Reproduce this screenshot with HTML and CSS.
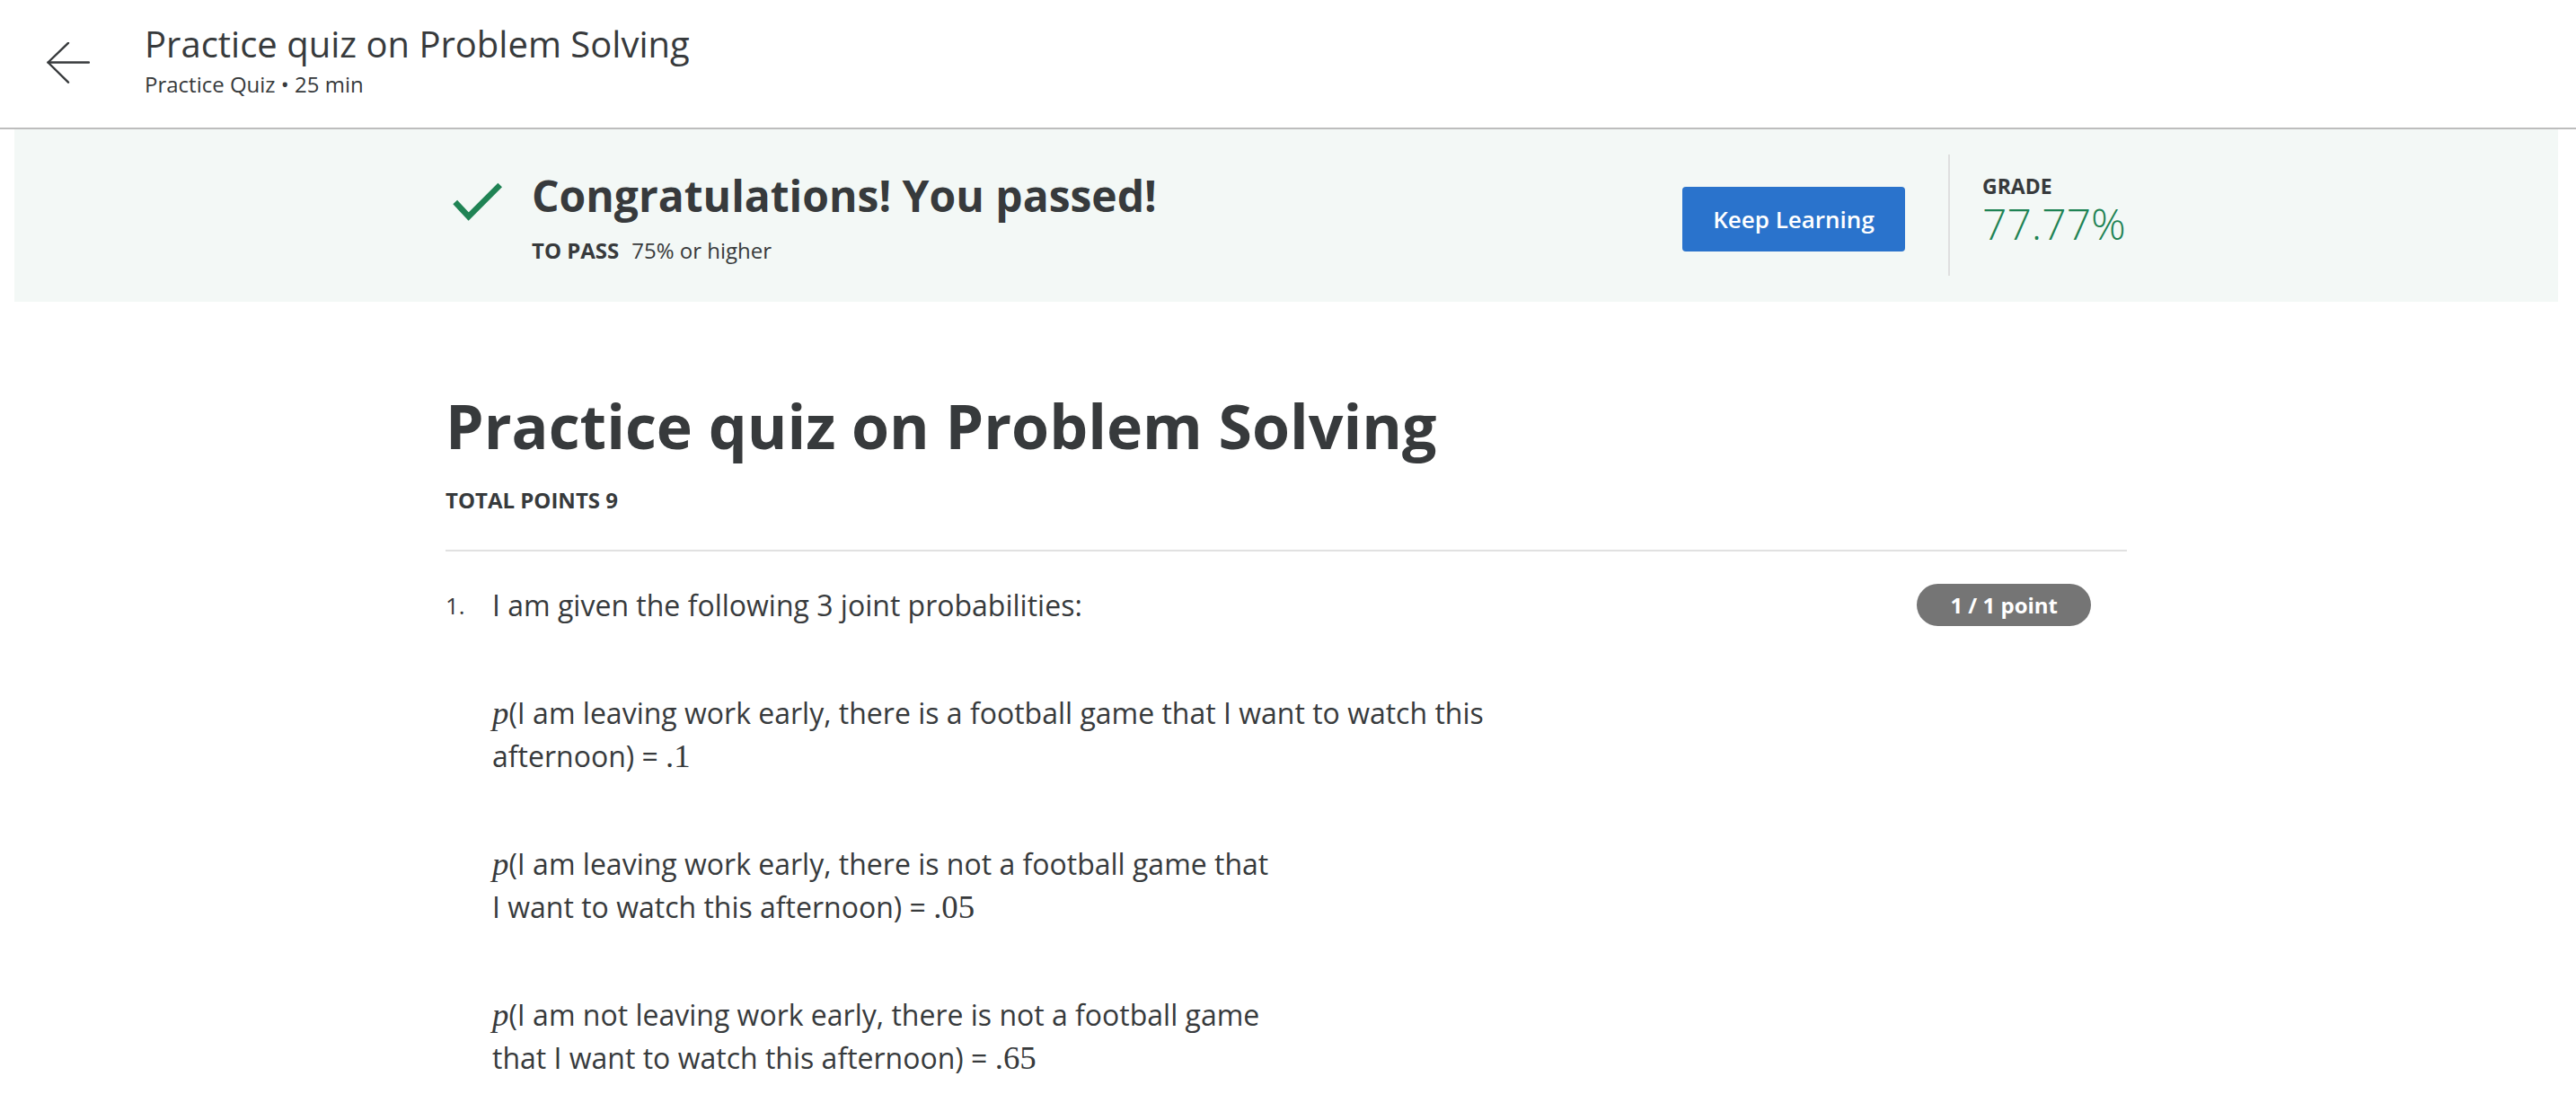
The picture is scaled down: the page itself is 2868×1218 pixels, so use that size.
FILE: index.html
```html
<!DOCTYPE html>
<html lang="en">
<head>
<meta charset="utf-8">
<title>Practice quiz on Problem Solving</title>
<link rel="stylesheet" href="styles.css">
</head>
<body>
<header class="topbar">
  <button class="back" aria-label="Back">
    <svg width="48" height="48" viewBox="0 0 48 48" fill="none" stroke="#373a3c" stroke-width="2.4" stroke-linecap="round" stroke-linejoin="round">
      <path d="M47 22.5H1.5"/>
      <path d="M24 0.8L1.5 22.5L24 44.7"/>
    </svg>
  </button>
  <div class="titles">
    <div class="title">Practice quiz on Problem Solving</div>
    <div class="subtitle">Practice Quiz • 25 min</div>
  </div>
</header>

<div class="page">
  <section class="banner">
    <div class="banner-inner">
      <div class="result">
        <svg class="check" width="60" height="48" viewBox="0 0 60 48" fill="none" stroke="#1f8354" stroke-width="6.5">
          <path d="M6.7 27L21.7 43L56.7 8"/>
        </svg>
        <div class="result-text">
          <div class="congrats">Congratulations! You passed!</div>
          <div class="topass"><span class="topass-label">TO PASS</span>75% or higher</div>
        </div>
      </div>
      <button class="keep">Keep Learning</button>
      <div class="vdivider"></div>
      <div class="grade">
        <div class="grade-label">GRADE</div>
        <div class="grade-value">77.77%</div>
      </div>
    </div>
  </section>

  <main class="content">
    <h1 class="quiz-title">Practice quiz on Problem Solving</h1>
    <div class="total">TOTAL POINTS 9</div>
    <hr class="rule">
    <div class="question">
      <div class="num">1.</div>
      <div class="qbody">
        <p>I am given the following 3 joint probabilities:</p>
        <p><span class="mi">p</span>(I am leaving work early, there is a football game that I want to watch this<br>afternoon) = <span class="mn">.1</span></p>
        <p><span class="mi">p</span>(I am leaving work early, there is not a football game that<br>I want to watch this afternoon) = <span class="mn">.05</span></p>
        <p><span class="mi">p</span>(I am not leaving work early, there is not a football game<br>that I want to watch this afternoon) = <span class="mn">.65</span></p>
      </div>
      <div class="badge">1 / 1 point</div>
    </div>
  </main>
</div>
</body>
</html>
```
FILE: styles.css
```css
html, body {
  margin: 0;
  padding: 0;
  background: #ffffff;
}
body {
  font-family: "Open Sans", "Noto Sans", sans-serif;
  color: #373a3c;
  overflow: hidden;
}

/* top bar */
.topbar {
  display: flex;
  align-items: flex-start;
  height: 117px;
  padding: 25px 0 0 52px;
  border-bottom: 2px solid #bdbdbd;
}
.back {
  margin: 22px 0 0 0;
  padding: 0;
  border: 0;
  background: none;
  width: 48px;
  height: 48px;
  display: block;
}
.back svg { display: block; }
.titles {
  margin-left: 61px;
}
.title {
  font-size: 40px;
  line-height: 48px;
  font-weight: 400;
}
.subtitle {
  margin-top: 6px;
  font-size: 24px;
  line-height: 30px;
}

/* page */
.page {
  padding: 0 20px 0 16px;
}

/* banner */
.banner {
  background: #f3f8f6;
  padding: 28px 0 29px;
}
.banner-inner {
  width: 1872px;
  margin: 0 auto;
  display: flex;
  align-items: flex-start;
}
.result {
  display: flex;
  align-items: flex-start;
  margin-top: 16px;
}
.check {
  display: block;
  margin: 10px 0 0 4px;
}
.result-text {
  margin-left: 32px;
}
.congrats {
  font-size: 48px;
  line-height: 60px;
  font-weight: 700;
}
.topass {
  margin-top: 16px;
  font-size: 24px;
  line-height: 30px;
}
.topass-label {
  font-weight: 700;
  margin-right: 14px;
}
.keep {
  margin: 36px 0 0 auto;
  width: 248px;
  height: 72px;
  border: 0;
  border-radius: 4px;
  background: #2a73cc;
  color: #ffffff;
  font-family: "Open Sans", sans-serif;
  font-size: 26px;
  font-weight: 600;
  padding: 0;
}
.vdivider {
  width: 2px;
  height: 135px;
  background: #dfdfdf;
  margin-left: 48px;
}
.grade {
  margin: 21px 0 0 36px;
  min-width: 161px;
}
.grade-label {
  font-size: 23px;
  line-height: 28px;
  font-weight: 700;
}
.grade-value {
  font-size: 48px;
  line-height: 56px;
  font-weight: 300;
  color: #1f8354;
}

/* content */
.content {
  width: 1872px;
  margin: 0 auto;
  padding-top: 98px;
}
.quiz-title {
  margin: 0;
  font-size: 68px;
  line-height: 80px;
  font-weight: 700;
}
.total {
  margin-top: 29px;
  font-size: 24px;
  line-height: 28px;
  font-weight: 700;
}
.rule {
  margin: 41px 0 0;
  border: 0;
  height: 2px;
  background: #e1e1e1;
}
.question {
  margin-top: 36px;
  display: flex;
  align-items: flex-start;
}
.num {
  width: 52px;
  flex: none;
  font-size: 26px;
  line-height: 48px;
}
.qbody {
  flex: 1;
  font-size: 32px;
  line-height: 48px;
}
.qbody p {
  margin: 0 0 72px;
}
.mi {
  font-family: "Liberation Serif", "DejaVu Serif", serif;
  font-style: italic;
  font-size: 1.15em;
  line-height: 1;
}
.mn {
  font-family: "Liberation Serif", "DejaVu Serif", serif;
  font-size: 1.15em;
  line-height: 1;
}
.badge {
  flex: none;
  margin-right: 40px;
  height: 47px;
  line-height: 47px;
  padding: 0 37px;
  border-radius: 24px;
  background: #757575;
  color: #ffffff;
  font-size: 24px;
  font-weight: 700;
}
```
